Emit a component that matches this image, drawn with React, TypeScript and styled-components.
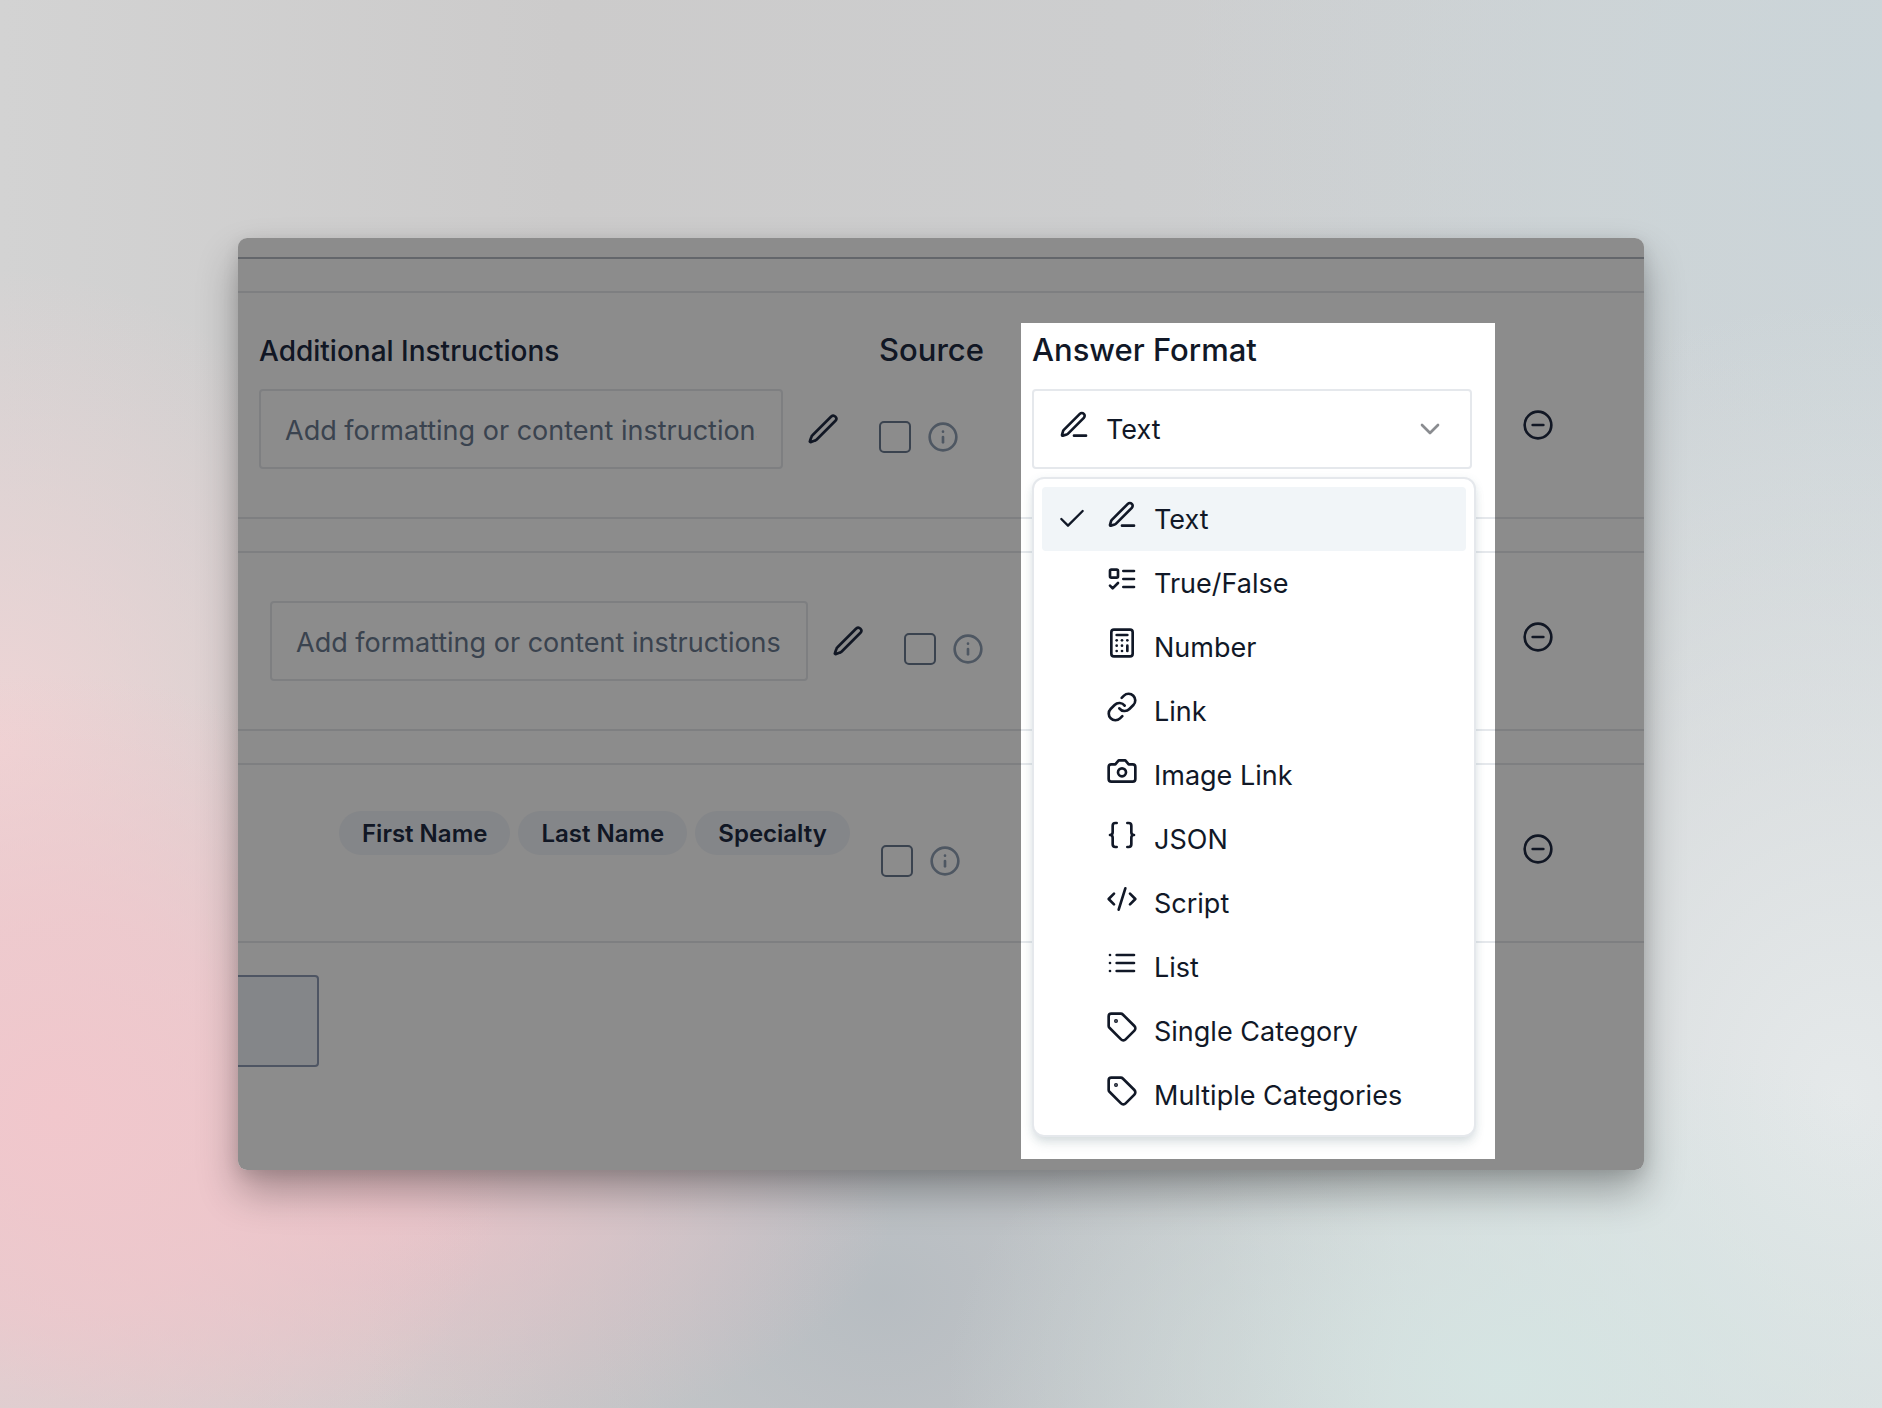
import React, { useState } from "react";
import styled, { createGlobalStyle } from "styled-components";
import { Braces, Calculator, Check, ChevronDown, CircleMinus, CodeXml, Info, Link, Tag } from "lucide-react";

const ink = "#111827";
const dimInk = "#202a42";
const line = "#e5e8ec";

const GlobalStyle = createGlobalStyle`
  *, *::before, *::after { box-sizing: border-box; }
  body {
    margin: 0;
    color: ${dimInk};
    font-family: Inter, "Noto Sans", sans-serif;
    font-size: 27px;
    line-height: 36px;
  }
  button, input, select { font: inherit; color: inherit; margin: 0; }
  svg { display: block; flex: none; }
`;

const Page = styled.main`
  min-height: 100vh;
  padding: 238px;
  background:
    radial-gradient(ellipse 460px 440px at 3% 79%, #f1c7cc 0%, rgba(241, 199, 204, 0.75) 45%, rgba(241, 199, 204, 0) 100%),
    radial-gradient(ellipse 420px 480px at 0% 53%, rgba(240, 212, 213, 0.95) 0%, rgba(240, 212, 213, 0) 100%),
    radial-gradient(ellipse 520px 260px at 20% 85%, rgba(234, 194, 200, 0.95) 0%, rgba(234, 194, 200, 0) 100%),
    radial-gradient(ellipse 560px 360px at 80% 98%, rgba(213, 229, 227, 0.95) 0%, rgba(213, 229, 227, 0) 100%),
    radial-gradient(ellipse 520px 460px at 47% 92%, rgba(182, 188, 193, 0.95) 0%, rgba(182, 188, 193, 0) 100%),
    radial-gradient(ellipse 640px 800px at 98% 78%, #e5e9ea 0%, rgba(229, 233, 234, 0) 100%),
    radial-gradient(ellipse 700px 700px at 100% 8%, #cbd5d9 0%, rgba(203, 213, 217, 0) 100%),
    linear-gradient(90deg, #d3d3d3 0%, #cccbcb 30%, #cdcecf 60%, #d0d4d6 100%);
`;

const Panel = styled.section`
  position: relative;
  overflow: hidden;
  padding-bottom: 103px;
  border-radius: 9px;
  background: #fff;
`;

const PanelShadow = styled.div`
  border-radius: 9px;
  box-shadow: 0 22px 40px rgba(0, 0, 0, 0.3), 0 4px 16px rgba(0, 0, 0, 0.1);
`;

const TopEdge = styled.div`
  height: 21px;
  border-bottom: 2px solid #b4bac4;
`;

const Questions = styled.form`
  display: flex;
  flex-direction: column;
  align-items: stretch;
  gap: 32px;
  padding-top: 32px;
`;

const Row = styled.div<{ $titled?: boolean }>`
  display: flex;
  align-items: flex-end;
  padding: ${(p) => (p.$titled ? 40 : 48)}px 0 48px;
  border: solid ${line};
  border-width: 2px 0;
`;

const InstructionsCell = styled.div<{ $inset: number }>`
  flex: 1;
  min-width: 0;
  padding-left: ${(p) => p.$inset}px;
`;

const SourceCell = styled.div<{ $width: number }>`
  width: ${(p) => p.$width}px;
`;

const AnswerCell = styled.div`
  position: relative;
  width: 440px;
  color: ${ink};
`;

const RemoveCell = styled.div`
  width: 172px;
  height: 80px;
  display: flex;
  align-items: center;
  padding: 0 0 8px 50px;
`;

const SmallTitle = styled.label`
  display: block;
  margin-bottom: 20px;
  font-size: 28px;
  font-weight: 500;
`;

const Title = styled.label`
  display: block;
  margin-bottom: 22px;
  font-size: 31px;
  line-height: 34px;
  font-weight: 500;
`;

const InstructionsLine = styled.div`
  display: flex;
  align-items: center;
  gap: 24px;
  height: 80px;
  padding-right: 40px;
`;

const TextBox = styled.input`
  flex: 1;
  min-width: 0;
  height: 80px;
  padding: 2px 24px 0;
  border: 2px solid ${line};
  border-radius: 4px;
  background: transparent;
  outline: none;
  &::placeholder { color: #6b7a90; opacity: 1; }
`;

const IconButton = styled.button`
  padding: 0;
  border: 0;
  background: none;
`;

const SourceLine = styled.div`
  display: flex;
  align-items: center;
  gap: 16px;
  height: 80px;
  padding-top: 16px;
  color: #8f9eb3;
`;

const Tick = styled.input`
  appearance: none;
  width: 32px;
  height: 32px;
  border: 2px solid #6b7a90;
  border-radius: 5px;
`;

const Badges = styled.div`
  display: flex;
  align-items: center;
  gap: 8px;
  height: 80px;
  padding-bottom: 40px;
`;

const Badge = styled.span`
  padding: 5px 23px 3px;
  border-radius: 22px;
  background: #f1f4f9;
  font-size: 24px;
  font-weight: 600;
  white-space: nowrap;
`;

const SelectFrame = styled.div`
  display: grid;
  grid-template-columns: 72px 1fr 58px;
  align-items: center;
  height: 80px;
  & > * { grid-row: 1; }
  & > svg { pointer-events: none; }
`;

const SelectLead = styled.span`
  grid-column: 1;
  padding: 0 0 8px 26px;
  pointer-events: none;
`;

const SelectBox = styled.select`
  grid-column: 1 / -1;
  appearance: none;
  height: 80px;
  padding: 2px 72px 0;
  border: 2px solid ${line};
  border-radius: 4px;
  background: transparent;
`;

const Arrow = styled(ChevronDown)`
  grid-column: 3;
  justify-self: start;
  color: #8a8c90;
`;

const Menu = styled.ul`
  position: absolute;
  z-index: 1;
  top: calc(100% + 8px);
  left: 0;
  width: 444px;
  margin: 0;
  padding: 8px;
  list-style: none;
  border: 2px solid ${line};
  border-radius: 12px;
  background: #fff;
  box-shadow: 0 8px 12px -2px rgba(40, 70, 80, 0.13), 0 2px 8px rgba(90, 130, 150, 0.12);
`;

const Option = styled.button<{ $active: boolean }>`
  display: grid;
  grid-template-columns: 34px 32px 1fr;
  column-gap: 16px;
  align-items: center;
  width: 100%;
  height: 64px;
  padding: 0 14px;
  border: 0;
  border-radius: 4px;
  background: ${(p) => (p.$active ? "#f1f5f8" : "transparent")};
  text-align: left;
`;

const OptionIcon = styled.span`
  grid-column: 2;
  padding-bottom: 8px;
`;

const OptionText = styled.span`
  grid-column: 3;
  padding-top: 2px;
`;

/* Lit window over the active column; its spread shadow dims everything else. */
const Spotlight = styled.div`
  position: absolute;
  z-index: 2;
  top: -10px;
  left: -11px;
  width: 474px;
  height: 836px;
  box-shadow: 0 0 0 4000px rgba(0, 0, 0, 0.45);
  pointer-events: none;
`;

const AddButton = styled.button`
  align-self: flex-start;
  width: 81px;
  height: 92px;
  border: 2px solid #8f9cb5;
  border-left: 0;
  border-radius: 0 4px 4px 0;
  background: #f1f4f9;
`;

const Stroke = ({ children }: { children: React.ReactNode }) => (
  <svg width="32" height="32" viewBox="0 0 24 24" fill="none" stroke="currentColor" strokeWidth="2" strokeLinecap="round" strokeLinejoin="round" aria-hidden="true">
    {children}
  </svg>
);

const PenIcon = () => (
  <Stroke>
    <path d="M18.16 2.66a2.25 2.25 0 0 1 3.18 3.18L7.3 19.9a3 3 0 0 1-1.3.8l-3 1.1a.6.6 0 0 1-.8-.8l1.1-3a3 3 0 0 1 .8-1.3Z" />
  </Stroke>
);

const PenLineIcon = () => (
  <Stroke>
    <path d="M12 20h9" />
    <path d="M16.376 3.622a1 1 0 0 1 3.002 3.002L7.368 18.635a2 2 0 0 1-.855.506l-2.872.838a.5.5 0 0 1-.62-.62l.838-2.872a2 2 0 0 1 .506-.854z" />
  </Stroke>
);

const TodoIcon = () => (
  <Stroke>
    <rect x="3" y="5" width="6" height="6" rx="1" />
    <path d="m3 17 2 2 4-4M13 6h8M13 12h8M13 18h8" />
  </Stroke>
);

const CameraIcon = () => (
  <Stroke>
    <path d="M14.5 4h-5L7 7H4a2 2 0 0 0-2 2v9a2 2 0 0 0 2 2h16a2 2 0 0 0 2-2V9a2 2 0 0 0-2-2h-3l-2.5-3z" />
    <circle cx="12" cy="13" r="3" />
  </Stroke>
);

const ListIcon = () => (
  <Stroke>
    <path d="M8 6h13M8 12h13M8 18h13M3 6h.01M3 12h.01M3 18h.01" />
  </Stroke>
);

const formats = [
  { name: "Text", icon: <PenLineIcon /> },
  { name: "True/False", icon: <TodoIcon /> },
  { name: "Number", icon: <Calculator size={32} /> },
  { name: "Link", icon: <Link size={32} /> },
  { name: "Image Link", icon: <CameraIcon /> },
  { name: "JSON", icon: <Braces size={32} /> },
  { name: "Script", icon: <CodeXml size={32} /> },
  { name: "List", icon: <ListIcon /> },
  { name: "Single Category", icon: <Tag size={32} /> },
  { name: "Multiple Categories", icon: <Tag size={32} /> },
];

const Instructions = ({ id }: { id: string }) => (
  <InstructionsLine>
    <TextBox id={id} aria-label="Additional Instructions" placeholder="Add formatting or content instructions" />
    <IconButton type="button" aria-label="Edit instructions"><PenIcon /></IconButton>
  </InstructionsLine>
);

const Source = ({ id }: { id: string }) => (
  <SourceLine>
    <Tick type="checkbox" id={id} aria-label="Source" />
    <Info size={32} />
  </SourceLine>
);

const Remove = () => (
  <RemoveCell>
    <IconButton type="button" aria-label="Remove"><CircleMinus size={32} /></IconButton>
  </RemoveCell>
);

export default function App() {
  const [format, setFormat] = useState("Text");
  const current = formats.find((f) => f.name === format) ?? formats[0];

  return (
    <>
      <GlobalStyle />
      <Page>
        <PanelShadow>
          <Panel>
            <TopEdge />
            <Questions>
              <Row $titled>
                <InstructionsCell $inset={21}>
                  <SmallTitle htmlFor="instructions-1">Additional Instructions</SmallTitle>
                  <Instructions id="instructions-1" />
                </InstructionsCell>
                <SourceCell $width={153}>
                  <Title htmlFor="source-1">Source</Title>
                  <Source id="source-1" />
                </SourceCell>
                <AnswerCell>
                  <Title htmlFor="format">Answer Format</Title>
                  <SelectFrame>
                    <SelectBox id="format" value={format} onChange={(e) => setFormat(e.target.value)}>
                      {formats.map((f) => <option key={f.name}>{f.name}</option>)}
                    </SelectBox>
                    <SelectLead>{current.icon}</SelectLead>
                    <Arrow size={32} />
                  </SelectFrame>
                  <Menu>
                    {formats.map((f) => (
                      <li key={f.name}>
                        <Option type="button" $active={f.name === format} onClick={() => setFormat(f.name)}>
                          {f.name === format && <Check size={32} strokeWidth={1.75} />}
                          <OptionIcon>{f.icon}</OptionIcon>
                          <OptionText>{f.name}</OptionText>
                        </Option>
                      </li>
                    ))}
                  </Menu>
                  <Spotlight />
                </AnswerCell>
                <Remove />
              </Row>
              <Row>
                <InstructionsCell $inset={32}>
                  <Instructions id="instructions-2" />
                </InstructionsCell>
                <SourceCell $width={128}><Source id="source-2" /></SourceCell>
                <AnswerCell />
                <Remove />
              </Row>
              <Row>
                <InstructionsCell $inset={101}>
                  <Badges>
                    <Badge>First Name</Badge>
                    <Badge>Last Name</Badge>
                    <Badge>Specialty</Badge>
                  </Badges>
                </InstructionsCell>
                <SourceCell $width={151}><Source id="source-3" /></SourceCell>
                <AnswerCell />
                <Remove />
              </Row>
              <AddButton type="button" aria-label="Add question" />
            </Questions>
          </Panel>
        </PanelShadow>
      </Page>
    </>
  );
}
